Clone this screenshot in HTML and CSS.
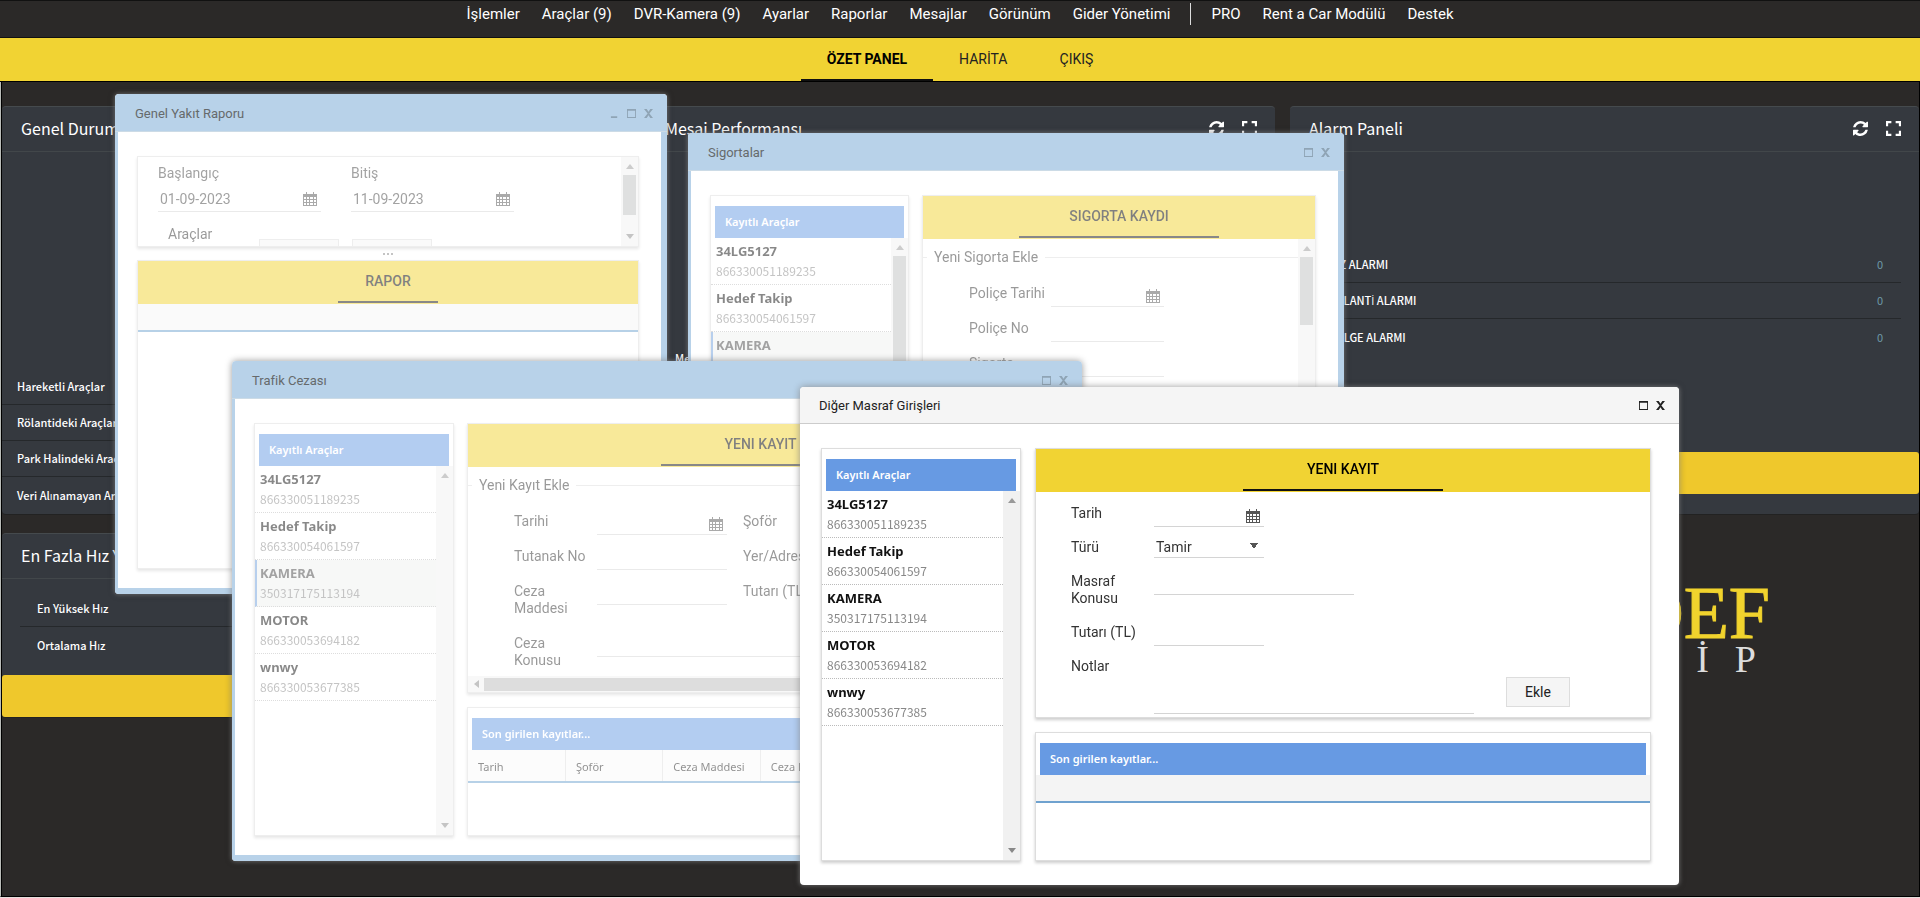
FILE: index.html
```html
<!DOCTYPE html>
<html lang="tr">
<head>
<meta charset="utf-8">
<title>Hedef Takip</title>
<link rel="stylesheet" href="styles.css">
</head>
<body>
<svg class="sprite" aria-hidden="true">
  <symbol id="i-calendar" viewBox="0 0 14 14"><path d="M3 0h1v2h6V0h1v2h3v12H0V2h3z"/><path class="cut" d="M1 5h2v2H1zM4 5h2v2H4zM7 5h3v2H7zM11 5h2v2h-2zM1 8h2v2H1zM4 8h2v2H4zM7 8h3v2H7zM11 8h2v2h-2zM1 11h2v2H1zM4 11h2v2H4zM7 11h3v2H7zM11 11h2v2h-2z"/></symbol>
  <symbol id="i-refresh" viewBox="0 0 1536 1536"><path d="M1511 928q0 5-1 7-64 268-268 434.500T764 1536q-146 0-282.500-55T238 1324l-129 129q-19 19-45 19t-45-19-19-45V960q0-26 19-45t45-19h448q26 0 45 19t19 45-19 45l-137 137q71 66 161 102t187 36q134 0 250-65t186-179q11-17 53-117 8-23 30-23h192q13 0 22.500 9.500t9.500 22.500zm25-800v448q0 26-19 45t-45 19h-448q-26 0-45-19t-19-45 19-45l138-138Q969 256 768 256q-134 0-250 65T332 500q-11 17-53 117-8 23-30 23H50q-13 0-22.500-9.500T18 608v-7q65-268 270-434.500T768 0q146 0 284 55.500T1297 212l130-129q19-19 45-19t45 19 19 45z"/></symbol>
  <symbol id="i-expand" viewBox="0 0 14 14"><path d="M0 0h5v2H2v3H0zM9 0h5v5h-2V2H9zM0 9h2v3h3v2H0zM12 9h2v5H9v-2h3z"/></symbol>
  <symbol id="i-min" viewBox="0 0 10 10"><path d="M1 8h7v2H1z"/></symbol>
  <symbol id="i-max" viewBox="0 0 10 10"><path fill-rule="evenodd" d="M0 0h10v10H0zM1 2v7h8V2z"/></symbol>
  <symbol id="i-close" viewBox="0 0 10 10"><path d="M0 0h3l2 3 2-3h3L6 5l4 5H7L5 7l-2 3H0l4-5z"/></symbol>
</svg>

<header class="topbar">
  <nav class="menu">
    <a href="#">İşlemler</a><a href="#">Araçlar (9)</a><a href="#">DVR-Kamera (9)</a><a href="#">Ayarlar</a><a href="#">Raporlar</a><a href="#">Mesajlar</a><a href="#">Görünüm</a><a href="#">Gider Yönetimi</a>
    <span class="menu__sep"></span>
    <a href="#">PRO</a><a href="#">Rent a Car Modülü</a><a href="#">Destek</a>
  </nav>
  <nav class="tabs">
    <a href="#" class="tabs__item tabs__item--active">ÖZET PANEL</a>
    <a href="#" class="tabs__item">HARİTA</a>
    <a href="#" class="tabs__item">ÇIKIŞ</a>
  </nav>
</header>

<main class="desktop">
  <div class="dashboard">
    <div class="column">
      <section class="panel panel--tall">
        <header class="panel__head"><h2>Genel Durum</h2></header>
        <ul class="stats">
          <li>Hareketli Araçlar</li><li>Rölantideki Araçlar</li><li>Park Halindeki Araçlar</li><li>Veri Alınamayan Araçlar</li>
        </ul>
      </section>
      <section class="panel panel--short">
        <header class="panel__head"><h2>En Fazla Hız Yapan</h2></header>
        <ul class="stats stats--inset"><li>En Yüksek Hız</li><li>Ortalama Hız</li></ul>
        <div class="strip"></div>
      </section>
    </div>
    <div class="column">
      <section class="panel panel--tall">
        <header class="panel__head"><h2>Mesai Performansı</h2>
          <button type="button" aria-label="Yenile"><svg><use href="#i-refresh"/></svg></button>
          <button type="button" aria-label="Genişlet"><svg><use href="#i-expand"/></svg></button>
        </header>
        <p class="panel__note">Mesai</p>
      </section>
    </div>
    <div class="column">
      <section class="panel panel--tall">
        <header class="panel__head"><h2>Alarm Paneli</h2>
          <button type="button" aria-label="Yenile"><svg><use href="#i-refresh"/></svg></button>
          <button type="button" aria-label="Genişlet"><svg><use href="#i-expand"/></svg></button>
        </header>
        <ul class="stats stats--alarm">
          <li><span>HIZ ALARMI</span><b>0</b></li><li><span>RÖLANT<span class="latin">İ</span> ALARMI</span><b>0</b></li><li><span>BÖLGE ALARMI</span><b>0</b></li>
        </ul>
        <div class="strip strip--foot"></div>
      </section>
      <div class="logo">
        <div class="logo__name">HEDEF</div>
        <div class="logo__sub"><span>T</span><span>A</span><span>K</span><span>İ</span><span>P</span></div>
      </div>
    </div>
  </div>

  <section class="window window--idle window--fuel">
    <header class="window__head"><h3>Genel Yakıt Raporu</h3>
      <button type="button" aria-label="Küçült"><svg><use href="#i-min"/></svg></button>
      <button type="button" aria-label="Büyüt"><svg><use href="#i-max"/></svg></button>
      <button type="button" aria-label="Kapat"><svg><use href="#i-close"/></svg></button>
    </header>
    <div class="window__frame"><div class="window__content stack">
      <div class="card filter">
        <form class="filter__form">
          <div class="filter__field"><label for="f1">Başlangıç</label><span class="date"><input id="f1" value="01-09-2023"><svg><use href="#i-calendar"/></svg></span></div>
          <div class="filter__field"><label for="f2">Bitiş</label><span class="date"><input id="f2" value="11-09-2023"><svg><use href="#i-calendar"/></svg></span></div>
          <div class="filter__row"><span class="filter__caption">Araçlar</span><button type="button" aria-label="Seç"></button><button type="button" aria-label="Rapor al"></button></div>
        </form>
        <div class="scroll scroll--filter"><i class="up"></i><i class="thumb"></i><i class="down"></i></div>
      </div>
      <div class="splitter"><i></i><i></i><i></i></div>
      <div class="card card--fill">
        <div class="bar"><button type="button" class="bar__tab bar__tab--small">RAPOR</button></div>
        <div class="gridhead"></div>
      </div>
    </div></div>
  </section>

  <section class="window window--idle window--insurance">
    <header class="window__head"><h3>Sigortalar</h3>
      <button type="button" aria-label="Büyüt"><svg><use href="#i-max"/></svg></button>
      <button type="button" aria-label="Kapat"><svg><use href="#i-close"/></svg></button>
    </header>
    <div class="window__frame"><div class="window__content split">
      <aside class="card vehicles">
        <h4 class="title">Kayıtlı Araçlar</h4>
        <div class="vehicles__body">
          <ul>
            <li><b>34LG5127</b>866330051189235</li><li><b>Hedef Takip</b>866330054061597</li><li class="is-selected"><b>KAMERA</b>350317175113194</li><li><b>MOTOR</b>866330053694182</li>
          </ul>
          <div class="scroll"><i class="up"></i><i class="thumb thumb--long"></i><i class="down"></i></div>
        </div>
      </aside>
      <div class="card">
        <div class="bar"><button type="button" class="bar__tab">SIGORTA KAYDI</button></div>
        <div class="scrollpane">
          <fieldset class="entry"><legend>Yeni Sigorta Ekle</legend>
            <div class="fields fields--policy">
              <label for="s1">Poliçe Tarihi</label><span class="date"><input id="s1"><svg><use href="#i-calendar"/></svg></span>
              <label for="s2">Poliçe No</label><input id="s2">
              <label for="s3">Sigorta</label><input id="s3">
            </div>
          </fieldset>
          <div class="scroll"><i class="up"></i><i class="thumb thumb--mid"></i><i class="down"></i></div>
        </div>
      </div>
    </div></div>
  </section>

  <section class="window window--idle window--ticket">
    <header class="window__head"><h3>Trafik Cezası</h3>
      <button type="button" aria-label="Büyüt"><svg><use href="#i-max"/></svg></button>
      <button type="button" aria-label="Kapat"><svg><use href="#i-close"/></svg></button>
    </header>
    <div class="window__frame"><div class="window__content split">
      <aside class="card vehicles">
        <h4 class="title">Kayıtlı Araçlar</h4>
        <div class="vehicles__body">
          <ul>
            <li><b>34LG5127</b>866330051189235</li><li><b>Hedef Takip</b>866330054061597</li><li class="is-selected"><b>KAMERA</b>350317175113194</li><li><b>MOTOR</b>866330053694182</li><li><b>wnwy</b>866330053677385</li>
          </ul>
          <div class="scroll"><i class="up"></i><i class="down"></i></div>
        </div>
      </aside>
      <div class="stack stack--gap">
        <div class="card card--form">
          <div class="bar"><button type="button" class="bar__tab">YENI KAYIT</button></div>
          <fieldset class="entry"><legend>Yeni Kayıt Ekle</legend>
            <div class="fields fields--ticket">
              <label for="t1">Tarihi</label><span class="date"><input id="t1"><svg><use href="#i-calendar"/></svg></span><label for="t2" class="second">Şoför</label><input id="t2">
              <label for="t3">Tutanak No</label><input id="t3"><label for="t4" class="second">Yer/Adresi</label><input id="t4">
              <label for="t5">Ceza<br>Maddesi</label><input id="t5"><label for="t6" class="second">Tutarı (TL)</label><input id="t6">
              <label for="t7">Ceza<br>Konusu</label><input id="t7" class="wide">
            </div>
          </fieldset>
          <div class="hscroll"><i class="left"></i><i class="hthumb"></i></div>
        </div>
        <div class="card card--fill card--titled">
          <h4 class="title">Son girilen kayıtlar...</h4>
          <table class="records"><thead><tr><th>Tarih</th><th>Şoför</th><th>Ceza Maddesi</th><th>Ceza Konusu</th><th>Yer</th><th></th></tr></thead></table>
        </div>
      </div>
    </div></div>
  </section>

  <section class="window window--expense">
    <header class="window__head"><h3>Diğer Masraf Girişleri</h3>
      <button type="button" aria-label="Büyüt"><svg><use href="#i-max"/></svg></button>
      <button type="button" aria-label="Kapat"><svg><use href="#i-close"/></svg></button>
    </header>
    <div class="window__frame"><div class="window__content split">
      <aside class="card vehicles">
        <h4 class="title">Kayıtlı Araçlar</h4>
        <div class="vehicles__body">
          <ul>
            <li><b>34LG5127</b>866330051189235</li><li><b>Hedef Takip</b>866330054061597</li><li><b>KAMERA</b>350317175113194</li><li><b>MOTOR</b>866330053694182</li><li><b>wnwy</b>866330053677385</li>
          </ul>
          <div class="scroll"><i class="up"></i><i class="down"></i></div>
        </div>
      </aside>
      <div class="stack stack--gap">
        <div class="card card--form">
          <div class="bar"><button type="button" class="bar__tab">YENI KAYIT</button></div>
          <form class="expense">
            <div class="fields fields--expense">
              <label for="m1">Tarih</label><span class="date"><input id="m1"><svg><use href="#i-calendar"/></svg></span>
              <label for="m2">Türü</label><span class="pick"><select id="m2"><option>Tamir</option></select></span>
              <label for="m3">Masraf Konusu</label><input id="m3" class="medium">
              <label for="m4">Tutarı (TL)</label><input id="m4">
              <label for="m5">Notlar</label><textarea id="m5"></textarea>
            </div>
            <button type="button" class="submit">Ekle</button>
          </form>
        </div>
        <div class="card card--fill card--titled">
          <h4 class="title">Son girilen kayıtlar...</h4>
          <div class="gridhead"></div>
        </div>
      </div>
    </div></div>
  </section>
</main>
</body>
</html>
```

FILE: styles.css
```css
* { box-sizing: border-box; }
html { height: 100%; }
body {
  margin: 0; min-height: 100%; display: flex; flex-direction: column;
  background: #2b2928; color: #333; font: 14px/17px Roboto, "Liberation Sans", sans-serif;
  overflow: hidden; border-bottom: 1px solid #e6dedd;
}
h2, h3, h4, ul, p, fieldset { margin: 0; padding: 0; }
ul { list-style: none; }
button, input, select, textarea { font: inherit; color: inherit; background: none; border: 0; padding: 0; margin: 0; border-radius: 0; }
i { display: block; }
svg { display: block; flex: none; fill: currentColor; }
.sprite { display: none; }
.cut { fill: #fff; }

/* top navigation */
.topbar { flex: none; }
.menu { height: 38px; display: flex; justify-content: center; gap: 22px; padding: 2px 0 0; border-bottom: 1px solid #111; border-top: 1px solid #111; }
.menu a { color: #fff; text-decoration: none; font-size: 15px; line-height: 23px; }
.menu__sep { width: 1px; height: 22px; margin: 0 -2px; background: #ddd; }
.tabs { height: 44px; display: flex; justify-content: center; background: #f1d333; border-bottom: 1px solid #000; }
.tabs__item { display: flex; align-items: center; padding: 2px 26px 0; border-bottom: 2px solid transparent; color: #222; text-decoration: none; }
.tabs__item--active { font-weight: 700; color: #000; border-bottom-color: #111; }

/* dashboard behind the windows */
.desktop { position: relative; flex: 1; border: 1px solid #000; border-top: 0; box-shadow: inset 1px 0 #000; border-left-color: #b9bcb8; }
.dashboard { display: grid; grid-template-columns: repeat(3, 1fr); gap: 15px; padding: 24px 0 0 1px; color: #fff; font-family: "Noto Sans CJK SC", "Open Sans", sans-serif; }
.column { display: flex; flex-direction: column; gap: 18px; min-width: 0; }
.panel { background: #35393f; border-top: 1px solid #454a4d; border-bottom: 1px solid #222; border-radius: 4px; display: flex; flex-direction: column; }
.panel--tall { min-height: 409px; }
.panel__head { height: 45px; display: flex; align-items: center; gap: 18px; padding: 0 18px 2px 19px; border-bottom: 1px solid #42474a; }
.panel__head h2 { flex: 1; font-size: 16px; line-height: 24px; font-weight: 400; }
.panel__head svg { width: 15px; height: 15px; }
.panel__note { margin-top: 198px; padding-left: 29px; font-size: 11px; font-weight: 500; }
.stats { margin-top: auto; margin-bottom: 1px; font-size: 11px; font-weight: 500; }
.stats li { height: 36px; display: flex; align-items: center; padding: 0 15px; border-bottom: 1px solid #25282b; }
.stats li:last-child { border-bottom: 0; }
.stats--inset { margin: 12px 20px 12px 18px; }
.stats--inset li { padding: 0 17px; }
.stats--alarm { margin: 95px 18px auto; }
.stats--alarm li { padding: 0 18px 0 20px; justify-content: space-between; }
.stats--alarm b { font-weight: 400; color: #6d9aa8; }
.latin { font-family: "Open Sans", sans-serif; }
.strip { height: 42px; background: #efc82c; border-radius: 3px; }
.strip--foot { margin-bottom: 20px; }
.logo { display: flex; flex-direction: column; align-items: flex-end; margin: 46px 149px 0 0; font-family: "Liberation Serif", serif; }
.logo__name { font-size: 74px; line-height: 68px; color: #f1d32d; -webkit-text-stroke: 1px #f1d32d; }
.logo__sub { display: flex; gap: 26px; font-size: 38px; line-height: 24px; color: #ddd; margin-right: 14px; }

/* windows on the desktop */
.window { position: absolute; display: flex; flex-direction: column; background: #fff; border-radius: 4px; box-shadow: 0 0 7px #0006, 0 0 5px #ffffff80; overflow: hidden; }
.window--fuel { left: 114px; top: 12px; width: 552px; height: 500px; }
.window--insurance { left: 687px; top: 51px; width: 656px; height: 480px; }
.window--ticket { left: 231px; top: 279px; width: 850px; height: 500px; }
.window--expense { left: 799px; top: 305px; width: 879px; height: 498px; }
.window__head { flex: none; height: 37px; display: flex; align-items: center; gap: 8px; padding: 0 14px 0 19px; background: #f5f5f5; border-bottom: 1px solid #ccc; color: #222; }
.window__head h3 { flex: 1; font-size: 13px; font-weight: 400; }
.window__head svg { width: 9px; height: 9px; }
.window--idle .window__head { height: 38px; padding: 2px 14px 0 20px; background: #b8d2e9; border-bottom-color: #ccdbe6; color: #666a6c; }
.window--idle .window__head button { color: #8fa4b5; }
.window__frame { flex: 1; min-height: 0; display: flex; }
.window--idle .window__frame { border: solid #b8d2e9; border-width: 0 6px 6px 3px; }
.window__content { flex: 1; min-width: 0; padding: 24px 28px 24px 21px; }
.window--idle .window__content { opacity: .5; padding: 24px 22px 19px 19px; }
.split { display: grid; grid-template-columns: 200px 1fr; gap: 14px; }
.window--idle .split { gap: 13px; }
.window--insurance .split { grid-template-columns: 199px 1fr; }
.stack { display: flex; flex-direction: column; min-width: 0; min-height: 0; }
.stack--gap { gap: 14px; }

.card { background: #fff; border: 1px solid #ddd; box-shadow: 0 2px 3px #0003; min-width: 0; min-height: 0; overflow: hidden; }
.card--fill { flex: 1; }
.card--form { height: 270px; display: flex; flex-direction: column; }
.card--titled { padding-top: 10px; }
.bar { height: 44px; flex: none; display: flex; justify-content: center; margin: -1px -1px 0; background: #f1d333; }
.bar__tab { width: 200px; margin-bottom: 1px; padding-top: 2px; border-bottom: 2px solid #111; font-weight: 500; color: #000; }
.bar__tab--small { width: 100px; }
.title { flex: none; height: 32px; margin: 0 4px; padding: 0 10px; background: #679ae3; color: #fff; font: 600 11px/32px "Noto Sans", sans-serif; }
.gridhead { height: 28px; background: #f4f4f4; border-bottom: 2px solid #6fa2cf; }

.vehicles { display: flex; flex-direction: column; padding-top: 10px; }
.vehicles__body { flex: 1; min-height: 0; display: flex; }
.vehicles ul { flex: 1; overflow: hidden; }
.vehicles li { height: 47px; padding: 3px 4px 2px 5px; border-bottom: 1px dotted #bbb; color: #888; font: 12px/20px "Noto Sans CJK SC", "Noto Sans", sans-serif; }
.vehicles li b { display: block; font: bold 13px/20px "Noto Sans", sans-serif; color: #111; }
.vehicles .is-selected { background: #eef0ef; border-left: 2px solid #6f9fdb; padding-left: 3px; }
.vehicles .is-selected b { color: #444; }

.scroll { width: 17px; flex: none; display: flex; flex-direction: column; align-items: center; padding: 7px 0; background: #f1f1f1; }
.up, .down { border: 4px solid transparent; }
.up { border-top: 0; border-bottom: 5px solid #999; }
.down { border-bottom: 0; border-top: 5px solid #888; margin-top: auto; }
.thumb { width: 13px; height: 40px; margin-top: 6px; background: #bfc1c1; }
.thumb--mid { height: 68px; }
.thumb--long { height: 160px; }
.hscroll { height: 16px; margin-top: auto; display: flex; align-items: center; gap: 5px; padding-left: 6px; background: #f1f1f1; }
.left { border: 4px solid transparent; border-left: 0; border-right: 5px solid #888; }
.hthumb { flex: 1; height: 13px; background: #bbb; }

/* fuel report */
.filter { height: 91px; flex: none; display: flex; }
.filter__form { flex: 1; display: flex; flex-wrap: wrap; align-content: flex-start; gap: 0 30px; padding: 8px 20px; overflow: hidden; }
.filter__field { width: 163px; display: flex; flex-direction: column; gap: 5px; color: #444; }
.filter__field .date { height: 25px; }
.filter__row { width: 100%; display: flex; align-items: flex-start; margin-top: 14px; }
.filter__caption { width: 91px; margin-left: 10px; }
.filter__row button { width: 80px; height: 30px; margin: 13px 13px 0 0; border: 1px solid #ddd; background: #f5f5f5; }
.splitter { height: 13px; flex: none; display: flex; justify-content: center; align-items: center; gap: 2px; }
.splitter i { width: 2px; height: 2px; background: #888; }

/* forms */
.fields { display: grid; align-items: start; row-gap: 12px; color: #333; }
.fields label { padding-bottom: 5px; }
.fields input, .date, .pick, .fields textarea { width: 100%; height: 22px; border-bottom: 1px solid #d4d4d4; }
.date { display: flex; align-items: center; padding: 0 4px 0 2px; color: #444; }
.fields .date input, .date input { flex: 1; width: 0; min-width: 0; height: 17px; border: 0; }
.date svg { width: 14px; height: 14px; color: #555; }
.entry { border: 0; border-top: 1px solid #ddd; margin-top: 10px; min-width: 0; }
.entry legend { margin-left: 4px; padding: 0 7px; color: #333; }
.scrollpane { display: flex; }
.scrollpane .entry { flex: 1; }
.scrollpane .scroll { height: 300px; }
.fields--policy { grid-template-columns: 82px 113px; row-gap: 13px; padding: 19px 46px; }
.fields--ticket { grid-template-columns: 83px 130px 83px 130px; row-gap: 13px; padding: 19px 46px 0; }
.fields--ticket .second { margin-left: 16px; }
.fields--ticket .wide { grid-column: 2 / 5; }
.expense { flex: 1; display: flex; align-items: flex-end; padding: 13px 80px 4px 35px; }
.fields--expense { grid-template-columns: 83px 110px 210px; align-self: flex-start; width: 435px; }
.fields--expense label { grid-column: 1; padding-right: 12px; }
.fields--expense .medium { grid-column: 2 / 4; width: 200px; }
.fields--expense textarea { grid-column: 2 / 4; width: 320px; height: 56px; resize: none; }
.pick { height: 19px; }
.pick select { width: 100%; height: 17px; appearance: none; padding: 0 2px; background: linear-gradient(to bottom left, #555 50%, transparent 0) right 10px top 4px / 5px 5px no-repeat, linear-gradient(to bottom right, #555 50%, transparent 0) right 5px top 4px / 5px 5px no-repeat; }
.submit { width: 64px; height: 30px; margin: 0 0 7px auto; border: 1px solid #ddd; background: #f5f5f5; color: #222; }
.records { width: 100%; table-layout: fixed; border-collapse: collapse; font: 11px/18px "Noto Sans", sans-serif; }
.records th { height: 32px; padding: 2px 10px 0; text-align: left; font-weight: 400; color: #222; background: #f8f8f8; border-right: 1px solid #ddd; border-bottom: 2px solid #6fa2cf; white-space: nowrap; }
```
